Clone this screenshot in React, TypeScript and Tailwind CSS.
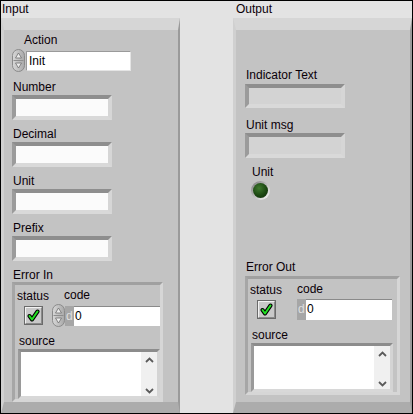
import React from "react";

function Label({ children, className = "" }: { children: React.ReactNode; className?: string }) {
  return (
    <div className={`h-[14px] text-[12px] leading-[14px] text-[#0a0008] whitespace-nowrap ${className}`}>
      {children}
    </div>
  );
}

function Arrows() {
  return (
    <svg width="13" height="23" viewBox="0 0 13 23" className="shrink-0">
      <defs>
        <linearGradient id="ag" x1="0" x2="1" y1="0" y2="0">
          <stop offset="0" stopColor="#d8d8d8" />
          <stop offset="1" stopColor="#a8a8a8" />
        </linearGradient>
      </defs>
      <rect x="0.5" y="0.5" width="12" height="22" rx="6" fill="url(#ag)" stroke="#8a8a8a" />
      <line x1="1.5" y1="11.5" x2="11.5" y2="11.5" stroke="#8e8e8e" />
      <path d="M6.5 4 L9.5 9 L3.5 9 Z" fill="#ececec" stroke="#6e6e6e" strokeWidth="0.8" />
      <path d="M6.5 19 L9.5 14 L3.5 14 Z" fill="#ececec" stroke="#6e6e6e" strokeWidth="0.8" />
    </svg>
  );
}

function Box({ indicator = false, className = "" }: { indicator?: boolean; className?: string }) {
  return (
    <div
      className={`w-[100px] border-4 border-t-[#8e8e8e] border-l-[#9b9b9b] border-r-[#d6d6d6] border-b-[#d9d9d9] ${
        indicator ? "bg-[#d3d3d3]" : "bg-[#fbfbfb]"
      } ${className}`}
    />
  );
}

function Check() {
  return (
    <div className="w-[19px] h-[19px] shrink-0 border border-[#6a6a6a] bg-[#c9c9c9]">
      <div className="w-full h-full border border-t-[#f2f2f2] border-l-[#f2f2f2] border-r-[#8a8a8a] border-b-[#8a8a8a] flex items-center justify-center">
        <svg width="13" height="13" viewBox="0 0 13 13">
          <path d="M2.5 7 L5 10.5 L10.5 2.5" stroke="#000" strokeWidth="4" fill="none" strokeLinejoin="round" strokeLinecap="round" />
          <path d="M2.5 7 L5 10.5 L10.5 2.5" stroke="#22e022" strokeWidth="2" fill="none" strokeLinejoin="round" strokeLinecap="round" />
        </svg>
      </div>
    </div>
  );
}

function Chevron({ up }: { up: boolean }) {
  return (
    <svg width="9" height="6" viewBox="0 0 9 6">
      <path d={up ? "M1 5 L4.5 1.5 L8 5" : "M1 1 L4.5 4.5 L8 1"} stroke="#5a5a5a" strokeWidth="1.8" fill="none" />
    </svg>
  );
}

function ErrorCluster({ control, className = "" }: { control: boolean; className?: string }) {
  return (
    <div
      className={`border-[3px] border-t-[#a0a0a0] border-l-[#a6a6a6] border-r-[#d6d6d6] border-b-[#d6d6d6] bg-[#c3c3c3] flex flex-col ${className}`}
    >
      <div className="flex h-[19px] pt-[3px]">
        <div className="w-[49px] pl-[2px] pt-[1px]">
          <Label>status</Label>
        </div>
        <Label>code</Label>
      </div>
      <div className="flex items-center h-[23px]">
        <div className="ml-[9px]">
          <Check />
        </div>
        {control ? (
          <div className="ml-[9px] flex items-center">
            <Arrows />
          </div>
        ) : (
          <div className="w-[21px]" />
        )}
        <div className={`flex items-stretch ${control ? "h-[20px]" : "h-[21px]"} bg-[#a6a6a6]`}>
          <div className="w-[9px] text-[12px] leading-[20px] text-[#dedede] pl-[1px]">d</div>
          <div className="w-[86px] bg-white border-t border-t-[#8a8a8a] text-[12px] leading-[18px] text-black pl-[1px]">0</div>
        </div>
      </div>
      <Label className="mt-[7px] ml-[4px]">source</Label>
      <div className="mt-[1px] ml-[3px] w-[142px] h-[50px] border-[3px] border-t-[#8c8c8c] border-l-[#9a9a9a] border-r-[#d4d4d4] border-b-[#d8d8d8] bg-white flex justify-end">
        <div className="w-[16px] h-full bg-[#f0f0f0] flex flex-col justify-between items-center pt-[5px] pb-[2px]">
          <Chevron up />
          <Chevron up={false} />
        </div>
      </div>
    </div>
  );
}

function Panel({ children }: { children: React.ReactNode }) {
  return (
    <div className="flex-1 flex flex-col bg-[#c3c3c3] border-t-[12px] border-t-[#d6d6d6] border-l-[3px] border-l-[#d0d0d0] border-r-[2px] border-r-[#9a9a9a] border-b-[11px] border-b-[#acacac]">
      {children}
    </div>
  );
}

export default function App() {
  return (
    <div className="w-[413px] h-[414px] bg-black p-px font-['Liberation_Sans',Arial,sans-serif]">
      <div className="flex h-full bg-[#e3e3e3]">
        <div className="w-[179px] flex flex-col">
          <div className="h-[17px] pl-[1px] pt-[1px]">
            <Label>Input</Label>
          </div>
          <Panel>
            <Label className="mt-[3px] ml-[20px]">Action</Label>
            <div className="mt-[2px] ml-[8px] flex items-center h-[23px]">
              <Arrows />
              <div className="ml-[1px] w-[105px] h-[20px] bg-white border border-t-[#9a9a9a] border-l-[#9a9a9a] border-r-[#e4e4e4] border-b-[#e4e4e4] text-[12px] leading-[18px] pl-[2px] text-black">
                Init
              </div>
            </div>
            <Label className="mt-[8px] ml-[9px]">Number</Label>
            <Box className="mt-[1px] ml-[8px] h-[25px]" />
            <Label className="mt-[7px] ml-[9px]">Decimal</Label>
            <Box className="mt-[1px] ml-[8px] h-[25px]" />
            <Label className="mt-[7px] ml-[9px]">Unit</Label>
            <Box className="mt-[1px] ml-[8px] h-[25px]" />
            <Label className="mt-[7px] ml-[9px]">Prefix</Label>
            <Box className="mt-[1px] ml-[8px] h-[25px]" />
            <Label className="mt-[7px] ml-[9px]">Error In</Label>
            <ErrorCluster control className="ml-[8px] w-[151px] h-[120px]" />
          </Panel>
        </div>
        <div className="w-[53px]" />
        <div className="w-[179px] flex flex-col">
          <div className="h-[17px] pl-[3px] pt-[1px]">
            <Label>Output</Label>
          </div>
          <Panel>
            <Label className="mt-[38px] ml-[10px]">Indicator Text</Label>
            <Box indicator className="mt-[2px] ml-[9px] h-[24px]" />
            <Label className="mt-[10px] ml-[10px]">Unit msg</Label>
            <Box indicator className="mt-[1px] ml-[9px] h-[25px]" />
            <Label className="mt-[7px] ml-[16px]">Unit</Label>
            <div className="mt-[2px] ml-[15px] w-[19px] h-[19px] rounded-full p-[2px] bg-[linear-gradient(135deg,#7a7a7a,#bdbdbd_50%,#ffffff)]">
              <div className="w-full h-full rounded-full bg-[radial-gradient(circle_at_40%_35%,#3f7a2e,#1b4712_55%,#0d2a08)]" />
            </div>
            <Label className="mt-[60px] ml-[10px]">Error Out</Label>
            <ErrorCluster control={false} className="mt-[2px] ml-[9px] w-[155px] h-[119px]" />
          </Panel>
        </div>
      </div>
    </div>
  );
}
